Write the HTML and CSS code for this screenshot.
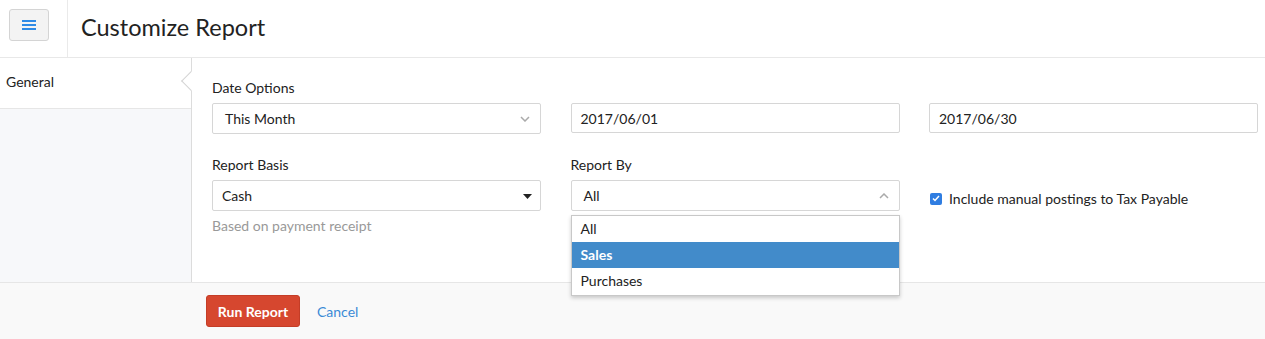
FILE: index.html
```html
<!DOCTYPE html>
<html lang="en">
<head>
	<meta charset="UTF-8">
	<title>Customize Report</title>
	<link rel="stylesheet" href="styles.css">
</head>
<body>
	<header class="top">
		<div class="menu_wrap">
			<button class="menu_btn" type="button">
				<svg width="14" height="10" viewBox="0 0 14 10"><rect y="0" width="14" height="2" fill="#2f8be6"/><rect y="4" width="14" height="2" fill="#2f8be6"/><rect y="8" width="14" height="2" fill="#2f8be6"/></svg>
			</button>
		</div>
		<h1>Customize Report</h1>
	</header>
	<section class="main">
		<aside class="side">
			<div class="side_item">General</div>
		</aside>
		<section class="content">
			<div class="field">
				<label>Date Options</label>
				<div class="box select wide">This Month
					<svg class="chev" width="10" height="6" viewBox="0 0 10 6"><path d="M1 1l4 4 4-4" fill="none" stroke="#aaa" stroke-width="1.5"/></svg>
				</div>
			</div>
			<div class="field">
				<label>&nbsp;</label>
				<div class="box">2017/06/01</div>
			</div>
			<div class="field">
				<label>&nbsp;</label>
				<div class="box">2017/06/30</div>
			</div>

			<div class="field">
				<label>Report Basis</label>
				<div class="box select">Cash
					<svg class="caret" width="9" height="5" viewBox="0 0 9 5"><path d="M0 0h9L4.5 5z" fill="#222"/></svg>
				</div>
				<p class="hint">Based on payment receipt</p>
			</div>
			<div class="field">
				<label>Report By</label>
				<div class="box select wide open">All
					<svg class="chev" width="10" height="6" viewBox="0 0 10 6"><path d="M1 5l4-4 4 4" fill="none" stroke="#aaa" stroke-width="1.5"/></svg>
					<ul class="drop">
						<li>All</li>
						<li class="active">Sales</li>
						<li>Purchases</li>
					</ul>
				</div>
			</div>
			<div class="field">
				<label>&nbsp;</label>
				<div class="check_row">
					<span class="check">
						<svg width="8" height="7" viewBox="0 0 8 7"><path d="M1 3.5l2 2 4-4.5" fill="none" stroke="#fff" stroke-width="1.5"/></svg>
					</span>
					Include manual postings to Tax Payable
				</div>
			</div>
		</section>
	</section>
	<footer class="foot">
		<button class="run_btn" type="button">Run Report</button>
		<a class="cancel" href="#">Cancel</a>
	</footer>
</body>
</html>
```

FILE: styles.css
```css
*{margin:0;padding:0;box-sizing:border-box}
li{list-style: none}
body{
	font-family: Lato, "Open Sans", sans-serif;
	font-size: 14px;
	color: #222;
	background: #fff;
}
.top{
	display: flex;
	align-items: center;
	height: 58px;
	border-bottom: 1px solid #e8e8e8;
}
.menu_wrap{
	width: 68px;
	height: 100%;
	border-right: 1px solid #eaeaea;
	padding: 9px 0 0 9px;
}
.menu_btn{
	display: flex;
	align-items: center;
	justify-content: center;
	width: 40px;
	height: 32px;
	background: #f3f3f3;
	border: 1px solid #d4d4d4;
	border-radius: 3px;
}
.top h1{
	font-size: 23.5px;
	font-weight: normal;
	margin-left: 13px;
	margin-top: -4px;
	color: #222;
}
.main{
	display: flex;
	height: 224px;
}
.side{
	flex-shrink: 0;
	width: 192px;
	background: #f7f8fa;
	border-right: 1px solid #dcdcdc;
}
.side_item{
	position: relative;
	height: 51px;
	padding: 15px 0 0 6px;
	background: #fff;
	border-bottom: 1px solid #e6e6e6;
}
/* notch on the right edge */
.side_item:after{
	content: '';
	position: absolute;
	right: -7px;
	top: 16px;
	width: 13px;
	height: 13px;
	background: #fff;
	border-left: 1px solid #d4d4d4;
	border-bottom: 1px solid #d4d4d4;
	transform: rotate(45deg);
}
.content{
	flex: 1;
	display: grid;
	grid-template-columns: repeat(3, 329px);
	column-gap: 29.5px;
	row-gap: 22px;
	align-content: start;
	padding: 21px 0 0 20px;
}
.field label{
	display: block;
	height: 18px;
	margin-bottom: 6px;
}
.box{
	position: relative;
	display: flex;
	align-items: center;
	height: 30px;
	padding: 0 9px;
	border: 1px solid #d6d6d6;
	border-radius: 2px;
	background: #fff;
}
.field .select{height: 31px}
.box.wide{padding-left: 12px}
.select .chev{
	position: absolute;
	right: 10px;
	top: 12px;
}
.select .caret{
	position: absolute;
	right: 8px;
	top: 13px;
}
.hint{
	margin-top: 6px;
	color: #999;
}
.drop{
	position: absolute;
	left: -1px;
	right: -1px;
	top: 34px;
	padding: 0 0 1px;
	background: #fff;
	border: 1px solid #c8c8c8;
	box-shadow: 0 2px 4px rgba(0,0,0,0.2);
	z-index: 2;
}
.drop li{
	height: 26px;
	line-height: 26px;
	padding-left: 9px;
}
.drop li.active{
	background: #428bca;
	color: #fff;
	font-weight: bold;
}
.check_row{
	display: flex;
	align-items: center;
	height: 31px;
	margin-top: 9px;
	padding-left: 1px;
}
.check{
	display: flex;
	align-items: center;
	justify-content: center;
	width: 12px;
	height: 12px;
	margin-right: 7px;
	background: #2f7de1;
	border-radius: 2px;
}
.foot{
	display: flex;
	align-items: center;
	height: 57px;
	padding-left: 206px;
	background: #f9f9f9;
	border-top: 1px solid #e6e6e6;
}
.run_btn{
	width: 94px;
	height: 32px;
	background: #d6472f;
	border: 1px solid #c43d27;
	border-radius: 3px;
	color: #fff;
	font-family: Lato, "Open Sans", sans-serif;
	font-size: 14px;
	font-weight: bold;
}
.cancel{
	margin-left: 17px;
	color: #3b8bd6;
	text-decoration: none;
}
```
